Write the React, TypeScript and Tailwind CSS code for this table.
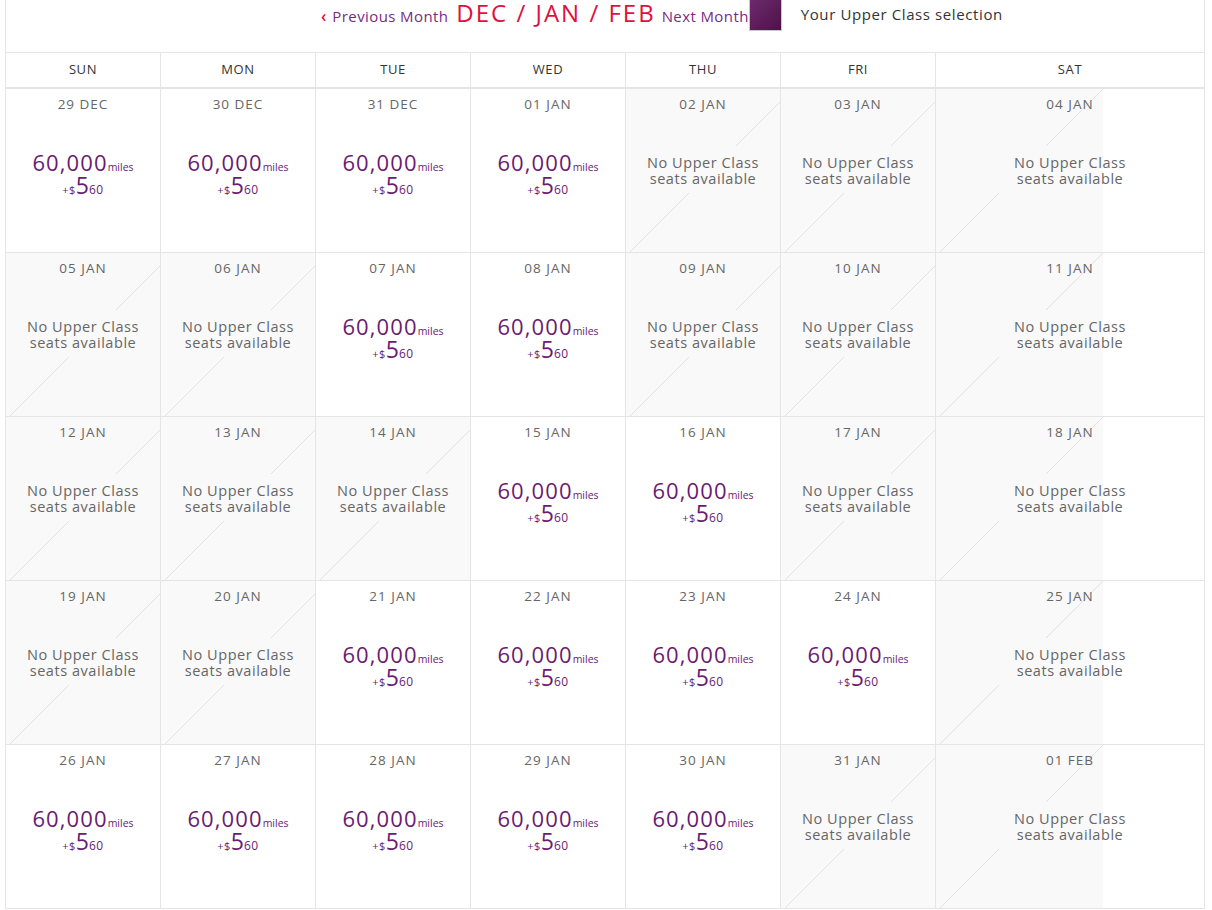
import React from "react";

type Cell = { d: string; p: boolean };

const rows: Cell[][] = [
  [
    { d: "29 DEC", p: true },
    { d: "30 DEC", p: true },
    { d: "31 DEC", p: true },
    { d: "01 JAN", p: true },
    { d: "02 JAN", p: false },
    { d: "03 JAN", p: false },
    { d: "04 JAN", p: false },
  ],
  [
    { d: "05 JAN", p: false },
    { d: "06 JAN", p: false },
    { d: "07 JAN", p: true },
    { d: "08 JAN", p: true },
    { d: "09 JAN", p: false },
    { d: "10 JAN", p: false },
    { d: "11 JAN", p: false },
  ],
  [
    { d: "12 JAN", p: false },
    { d: "13 JAN", p: false },
    { d: "14 JAN", p: false },
    { d: "15 JAN", p: true },
    { d: "16 JAN", p: true },
    { d: "17 JAN", p: false },
    { d: "18 JAN", p: false },
  ],
  [
    { d: "19 JAN", p: false },
    { d: "20 JAN", p: false },
    { d: "21 JAN", p: true },
    { d: "22 JAN", p: true },
    { d: "23 JAN", p: true },
    { d: "24 JAN", p: true },
    { d: "25 JAN", p: false },
  ],
  [
    { d: "26 JAN", p: true },
    { d: "27 JAN", p: true },
    { d: "28 JAN", p: true },
    { d: "29 JAN", p: true },
    { d: "30 JAN", p: true },
    { d: "31 JAN", p: false },
    { d: "01 FEB", p: false },
  ],
];

const days = ["SUN", "MON", "TUE", "WED", "THU", "FRI", "SAT"];

const naBg =
  "bg-[linear-gradient(#f9f9f9,#f9f9f9),linear-gradient(to_bottom_right,transparent_calc(50%-0.7px),#e2e2e2_50%,transparent_calc(50%+0.7px)),linear-gradient(#f9f9f9,#f9f9f9)] bg-no-repeat bg-[length:167px_47px,167px_167px,167px_167px] bg-[position:0_57px,0_0,0_0]";

function DayCell({ c, last }: { c: Cell; last: boolean }) {
  return (
    <div
      className={`h-[164px] border-b border-[#e5e5e5] flex flex-col items-center ${
        last ? "" : "border-r"
      } ${c.p ? "bg-white" : naBg}`}
    >
      <div className="pt-[5px] h-[30px] text-[13.5px] leading-[20px] text-[#666] tracking-[1px]">
        {c.d}
      </div>
      <div className="flex-1 flex flex-col items-center justify-center pb-[30px]">
        {c.p ? (
          <div className="flex flex-col items-center text-[#6a1b72] pt-[11px]">
            <div className="flex items-baseline leading-[22px]">
              <span className="text-[22px] tracking-[1.1px]">60,000</span>
              <span className="text-[10.5px]">miles</span>
            </div>
            <div className="flex items-baseline leading-[22px] -mt-[4px]">
              <span className="text-[11px] tracking-[0.5px]">+$</span>
              <span className="text-[23px]">5</span>
              <span className="text-[12px] tracking-[0.5px]">60</span>
            </div>
          </div>
        ) : (
          <div className="py-[7px] text-[14.5px] leading-[16px] text-[#666] text-center tracking-[0.55px]">
            No Upper Class
            <br />
            seats available
          </div>
        )}
      </div>
    </div>
  );
}

export default function App() {
  return (
    <div
      className="w-[1212px] h-[910px] overflow-hidden bg-white px-[5px]"
      style={{ fontFamily: '"Open Sans", "Liberation Sans", sans-serif' }}
    >
      <div className="w-[1200px] border-x border-[#e5e5e5]">
        <div className="h-[53px] border-b border-[#e5e5e5] flex items-start pl-[315px]">
          <div className="flex items-baseline leading-[26px]">
            <span className="text-[#e0103d] text-[16px] mr-[6px] font-semibold">‹</span>
            <span className="text-[#7b2a82] text-[15px] tracking-[0.4px]">Previous Month</span>
            <span className="text-[#e0103d] text-[24px] ml-[8px] mr-[6px] tracking-[2px]">
              DEC / JAN / FEB
            </span>
            <span className="text-[#7b2a82] text-[15px] tracking-[0.4px]">Next Month</span>
          </div>
          <div className="w-[33px] h-[31px] border-l border-r border-b border-[#c8c8c8] bg-[linear-gradient(135deg,#6e2a6c,#4c1249)]" />
          <div className="ml-[19px] pt-[3px] text-[15px] text-[#333] tracking-[0.6px]">
            Your Upper Class selection
          </div>
        </div>
        <div className="grid grid-cols-[155px_155px_155px_155px_155px_155px_1fr] h-[36px] border-b-2 border-[#e5e5e5]">
          {days.map((d, i) => (
            <div
              key={d}
              className={`flex items-center justify-center text-[13px] text-[#333] tracking-[0.6px] ${
                i < 6 ? "border-r border-[#e5e5e5]" : ""
              }`}
            >
              {d}
            </div>
          ))}
        </div>
        {rows.map((r, ri) => (
          <div
            key={ri}
            className="grid grid-cols-[155px_155px_155px_155px_155px_155px_1fr]"
          >
            {r.map((c, ci) => (
              <DayCell key={ci} c={c} last={ci === 6} />
            ))}
          </div>
        ))}
      </div>
    </div>
  );
}
